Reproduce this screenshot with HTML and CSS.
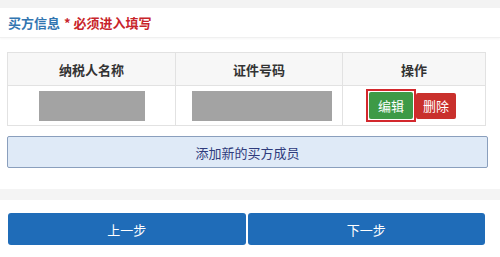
FILE: index.html
```html
<!doctype html>
<html lang="zh">
	<head>
		<meta charset="utf-8">
		<title>买方信息</title>
		<link rel="stylesheet" href="styles.css">
	</head>
	<body>
		<div class="topbar"></div>

		<div class="section-head">
			<span class="section-title">买方信息</span>
			<span class="required">* 必须进入填写</span>
		</div>

		<div class="panel">
			<table class="buyers">
				<thead>
					<tr>
						<th class="col-name">纳税人名称</th>
						<th class="col-id">证件号码</th>
						<th class="col-op">操作</th>
					</tr>
				</thead>
				<tbody>
					<tr>
						<td><span class="mask mask-name"></span></td>
						<td><span class="mask mask-id"></span></td>
						<td>
							<div class="ops">
								<span class="edit-ring"><button class="btn btn-edit">编辑</button></span>
								<button class="btn btn-del">删除</button>
							</div>
						</td>
					</tr>
				</tbody>
			</table>

			<button class="add-member">添加新的买方成员</button>
		</div>

		<div class="gap-band"></div>

		<div class="steps">
			<button class="step">上一步</button>
			<button class="step">下一步</button>
		</div>
	</body>
</html>
```

FILE: styles.css
```css
* { box-sizing: border-box; }

body {
	margin: 0;
	width: 500px;
	background: #fff;
	font-family: "Noto Sans CJK SC", "Noto Sans", sans-serif;
	color: #333;
}

button {
	font-family: inherit;
	cursor: pointer;
}

/* Header */
.topbar {
	height: 8px;
	background: #f3f3f3;
}

.section-head {
	height: 30px;
	padding-left: 8px;
	display: flex;
	align-items: center;
	font-size: 13px;
	font-weight: 700;
	border-bottom: 1px solid #f0f0f0;
	box-shadow: 0 1px 2px rgba(0, 0, 0, 0.04);
}
.section-title {
	color: #3276b1;
}
.required {
	color: #c8252b;
	margin-left: 4px;
}

/* Table */
.panel {
	padding: 14px 12px 0 7px;
}

.buyers {
	width: 479px;
	border-collapse: collapse;
	table-layout: fixed;
	font-size: 13px;
}
.buyers th,
.buyers td {
	border: 1px solid #e2e2e2;
	text-align: center;
	padding: 0;
}
.buyers th {
	height: 33px;
	background: #f7f7f7;
	font-weight: 700;
	color: #333;
}
.buyers td {
	height: 40px;
}
.col-name { width: 168px; }
.col-id { width: 167px; }

.mask {
	display: inline-block;
	height: 30px;
	background: #a3a3a3;
	vertical-align: middle;
}
.mask-name { width: 106px; }
.mask-id { width: 140px; margin-left: 5px; }

.ops {
	display: flex;
	justify-content: center;
	align-items: center;
	padding-right: 6px;
}
.edit-ring {
	display: inline-flex;
	padding: 1px;
	border: 2px solid #d3282d;
}
.btn {
	border: 0;
	color: #fff;
	font-size: 13px;
	padding: 0;
	height: 27px;
	border-radius: 2px;
}
.btn-edit {
	width: 44px;
	background: #3d9a46;
}
.btn-del {
	width: 40px;
	height: 26px;
	background: #c9302c;
}

.add-member {
	display: block;
	width: 481px;
	height: 32px;
	margin-top: 10px;
	background: #dfeaf7;
	border: 1px solid #8a9fbd;
	border-radius: 2px;
	color: #2f3b7c;
	font-size: 13px;
}

/* Footer */
.gap-band {
	height: 11px;
	margin-top: 21px;
	background: #f4f4f4;
}

.steps {
	display: flex;
	gap: 2px;
	padding: 13px 15px 0 8px;
}
.step {
	flex: 1;
	height: 32px;
	border: 0;
	border-radius: 3px;
	background: #1f6cb8;
	color: #fff;
	font-size: 13px;
}
```
